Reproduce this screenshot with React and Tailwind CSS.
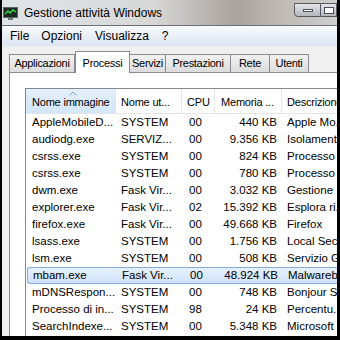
import React from "react";

const rows = [
  ["AppleMobileD...", "SYSTEM", "00", "440 KB", "Apple Mo..."],
  ["audiodg.exe", "SERVIZ...", "00", "9.356 KB", "Isolament..."],
  ["csrss.exe", "SYSTEM", "00", "824 KB", "Processo ..."],
  ["csrss.exe", "SYSTEM", "00", "780 KB", "Processo ..."],
  ["dwm.exe", "Fask Vir...", "00", "3.032 KB", "Gestione ..."],
  ["explorer.exe", "Fask Vir...", "02", "15.392 KB", "Esplora ri..."],
  ["firefox.exe", "Fask Vir...", "00", "49.668 KB", "Firefox"],
  ["lsass.exe", "SYSTEM", "00", "1.756 KB", "Local Sec..."],
  ["lsm.exe", "SYSTEM", "00", "508 KB", "Servizio G..."],
  ["mbam.exe", "Fask Vir...", "00", "48.924 KB", "Malwareb..."],
  ["mDNSRespon...", "SYSTEM", "00", "748 KB", "Bonjour S..."],
  ["Processo di in...", "SYSTEM", "98", "24 KB", "Percentu..."],
  ["SearchIndexe...", "SYSTEM", "00", "5.348 KB", "Microsoft ..."],
];

const tabs = [
  { label: "Applicazioni", w: "w-[66px]" },
  { label: "Processi", w: "w-[55px]", active: true },
  { label: "Servizi", w: "w-[37px]" },
  { label: "Prestazioni", w: "w-[66px]" },
  { label: "Rete", w: "w-[40px]" },
  { label: "Utenti", w: "w-[40px]" },
];

function AppIcon() {
  return (
    <svg width="15" height="13" viewBox="0 0 15 13">
      <rect x="0.5" y="0.5" width="14" height="10" fill="#1d2a22" stroke="#5a6a60" />
      <path d="M2 7 L5 4 L7 6 L10 3 L13 5" stroke="#35e04a" strokeWidth="1.4" fill="none" />
      <rect x="5" y="11" width="5" height="2" fill="#6b7a70" />
    </svg>
  );
}

export default function App() {
  return (
    <div className="w-[340px] h-[340px] bg-black pl-[2px] pr-[3px] pb-[4px] overflow-hidden" style={{ fontFamily: '"Liberation Sans", Arial, sans-serif' }}>
      <div className="h-full flex flex-col bg-[#f0f0f0] overflow-hidden">
        {/* title bar */}
        <div className="h-[26px] flex items-center bg-[linear-gradient(90deg,#dfe3e8_0%,#d8d8d8_45%,#a9a29c_70%,#bdb8b3_82%,#cfcfcf_100%)] border-b border-[#6b6f75]">
          <div className="ml-[1px] mt-[1px]"><AppIcon /></div>
          <span className="ml-[6px] text-[12px] text-black">Gestione attività Windows</span>
          <div className="ml-auto flex self-start mt-[3px]">
            <div className="w-[27px] h-[14px] rounded-bl-[4px] border border-[#55595f] bg-[linear-gradient(#e4e6e9,#b3b7bd)] flex items-center justify-center">
              <div className="w-[10px] h-[3px] bg-white border border-[#4a4e54]" />
            </div>
            <div className="w-[16px] h-[14px] border border-l-0 border-[#55595f] bg-[linear-gradient(#e4e6e9,#b3b7bd)] flex items-center pl-[3px]">
              <div className="w-[10px] h-[7px] border border-[#4a4e54] bg-white" />
            </div>
          </div>
        </div>

        {/* menu bar */}
        <div className="h-[20px] flex items-center text-[12px] text-black bg-[linear-gradient(#f8fafd,#dde6f2)]">
          <span className="ml-[8px]">File</span>
          <span className="ml-[12px]">Opzioni</span>
          <span className="ml-[13px]">Visualizza</span>
          <span className="ml-[13px]">?</span>
        </div>

        {/* tabs */}
        <div className="h-[26px] flex items-end pl-[7px] pt-[4px]">
          {tabs.map((t) =>
            t.active ? (
              <div key={t.label} className={`${t.w} h-[22px] -mb-px relative z-10 bg-white border border-b-0 border-[#898c95] flex items-start justify-center pt-[3px] text-[11px] tracking-[-0.3px] text-black whitespace-nowrap`}>
                {t.label}
              </div>
            ) : (
              <div key={t.label} className={`${t.w} h-[18px] border border-b-0 border-[#898c95] -ml-px first:ml-0 bg-[linear-gradient(#f2f2f2,#dcdcdc)] flex items-center justify-center text-[11px] tracking-[-0.3px] text-black whitespace-nowrap`}>
                {t.label}
              </div>
            )
          )}
        </div>

        {/* panel */}
        <div className="flex-1 ml-[7px] bg-white border-l border-t border-[#898c95] pl-[15px] pt-[15px] overflow-hidden">
          <div className="h-full border-l border-t border-[#828790] bg-white overflow-hidden text-[11.5px] text-black">
            {/* header */}
            <div className="h-[25px] flex border-b border-[#e5e5e5] whitespace-nowrap text-[11px] tracking-[-0.2px]">
              <div className="w-[90px] shrink-0 relative bg-[linear-gradient(#e3effc,#d3e6fb)] border-r border-[#dde5ee] flex items-center pl-[6px] pt-[2px]">
                <svg className="absolute left-[43px] top-[2px]" width="8" height="5" viewBox="0 0 8 5">
                  <path d="M0.5 4.5 L4 1 L7.5 4.5" stroke="#8aa3c0" fill="none" />
                </svg>
                Nome immagine
              </div>
              <div className="w-[66px] shrink-0 border-r border-[#e5e5e5] flex items-center pl-[5px] pt-[2px]">Nome ut...</div>
              <div className="w-[33px] shrink-0 border-r border-[#e5e5e5] flex items-center pl-[5px] pt-[2px]">CPU</div>
              <div className="w-[67px] shrink-0 border-r border-[#e5e5e5] flex items-center pl-[6px] pt-[2px] overflow-hidden">Memoria ...</div>
              <div className="flex-1 flex items-center pl-[5px] pt-[2px] overflow-hidden">Descrizione</div>
            </div>
            {/* rows */}
            {rows.map((r, i) => {
              const sel = r[0] === "mbam.exe";
              return (
                <div
                  key={i}
                  className={`h-[17px] flex items-center whitespace-nowrap ${sel ? "ml-[1px] rounded-l-[3px] border border-r-0 border-[#84acdd] bg-[linear-gradient(#e6f0fd,#cfe3fc)]" : ""}`}
                >
                  <div className={`${sel ? "w-[89px] pl-[5px]" : "w-[90px] pl-[6px]"} shrink-0 overflow-hidden`}>{r[0]}</div>
                  <div className="w-[66px] shrink-0 pl-[5px] overflow-hidden">{r[1]}</div>
                  <div className="w-[33px] shrink-0 pl-[7px]">{r[2]}</div>
                  <div className="w-[67px] shrink-0 pr-[5px] text-right">{r[3]}</div>
                  <div className="flex-1 pl-[5px] overflow-hidden">{r[4]}</div>
                </div>
              );
            })}
          </div>
        </div>
      </div>
    </div>
  );
}
